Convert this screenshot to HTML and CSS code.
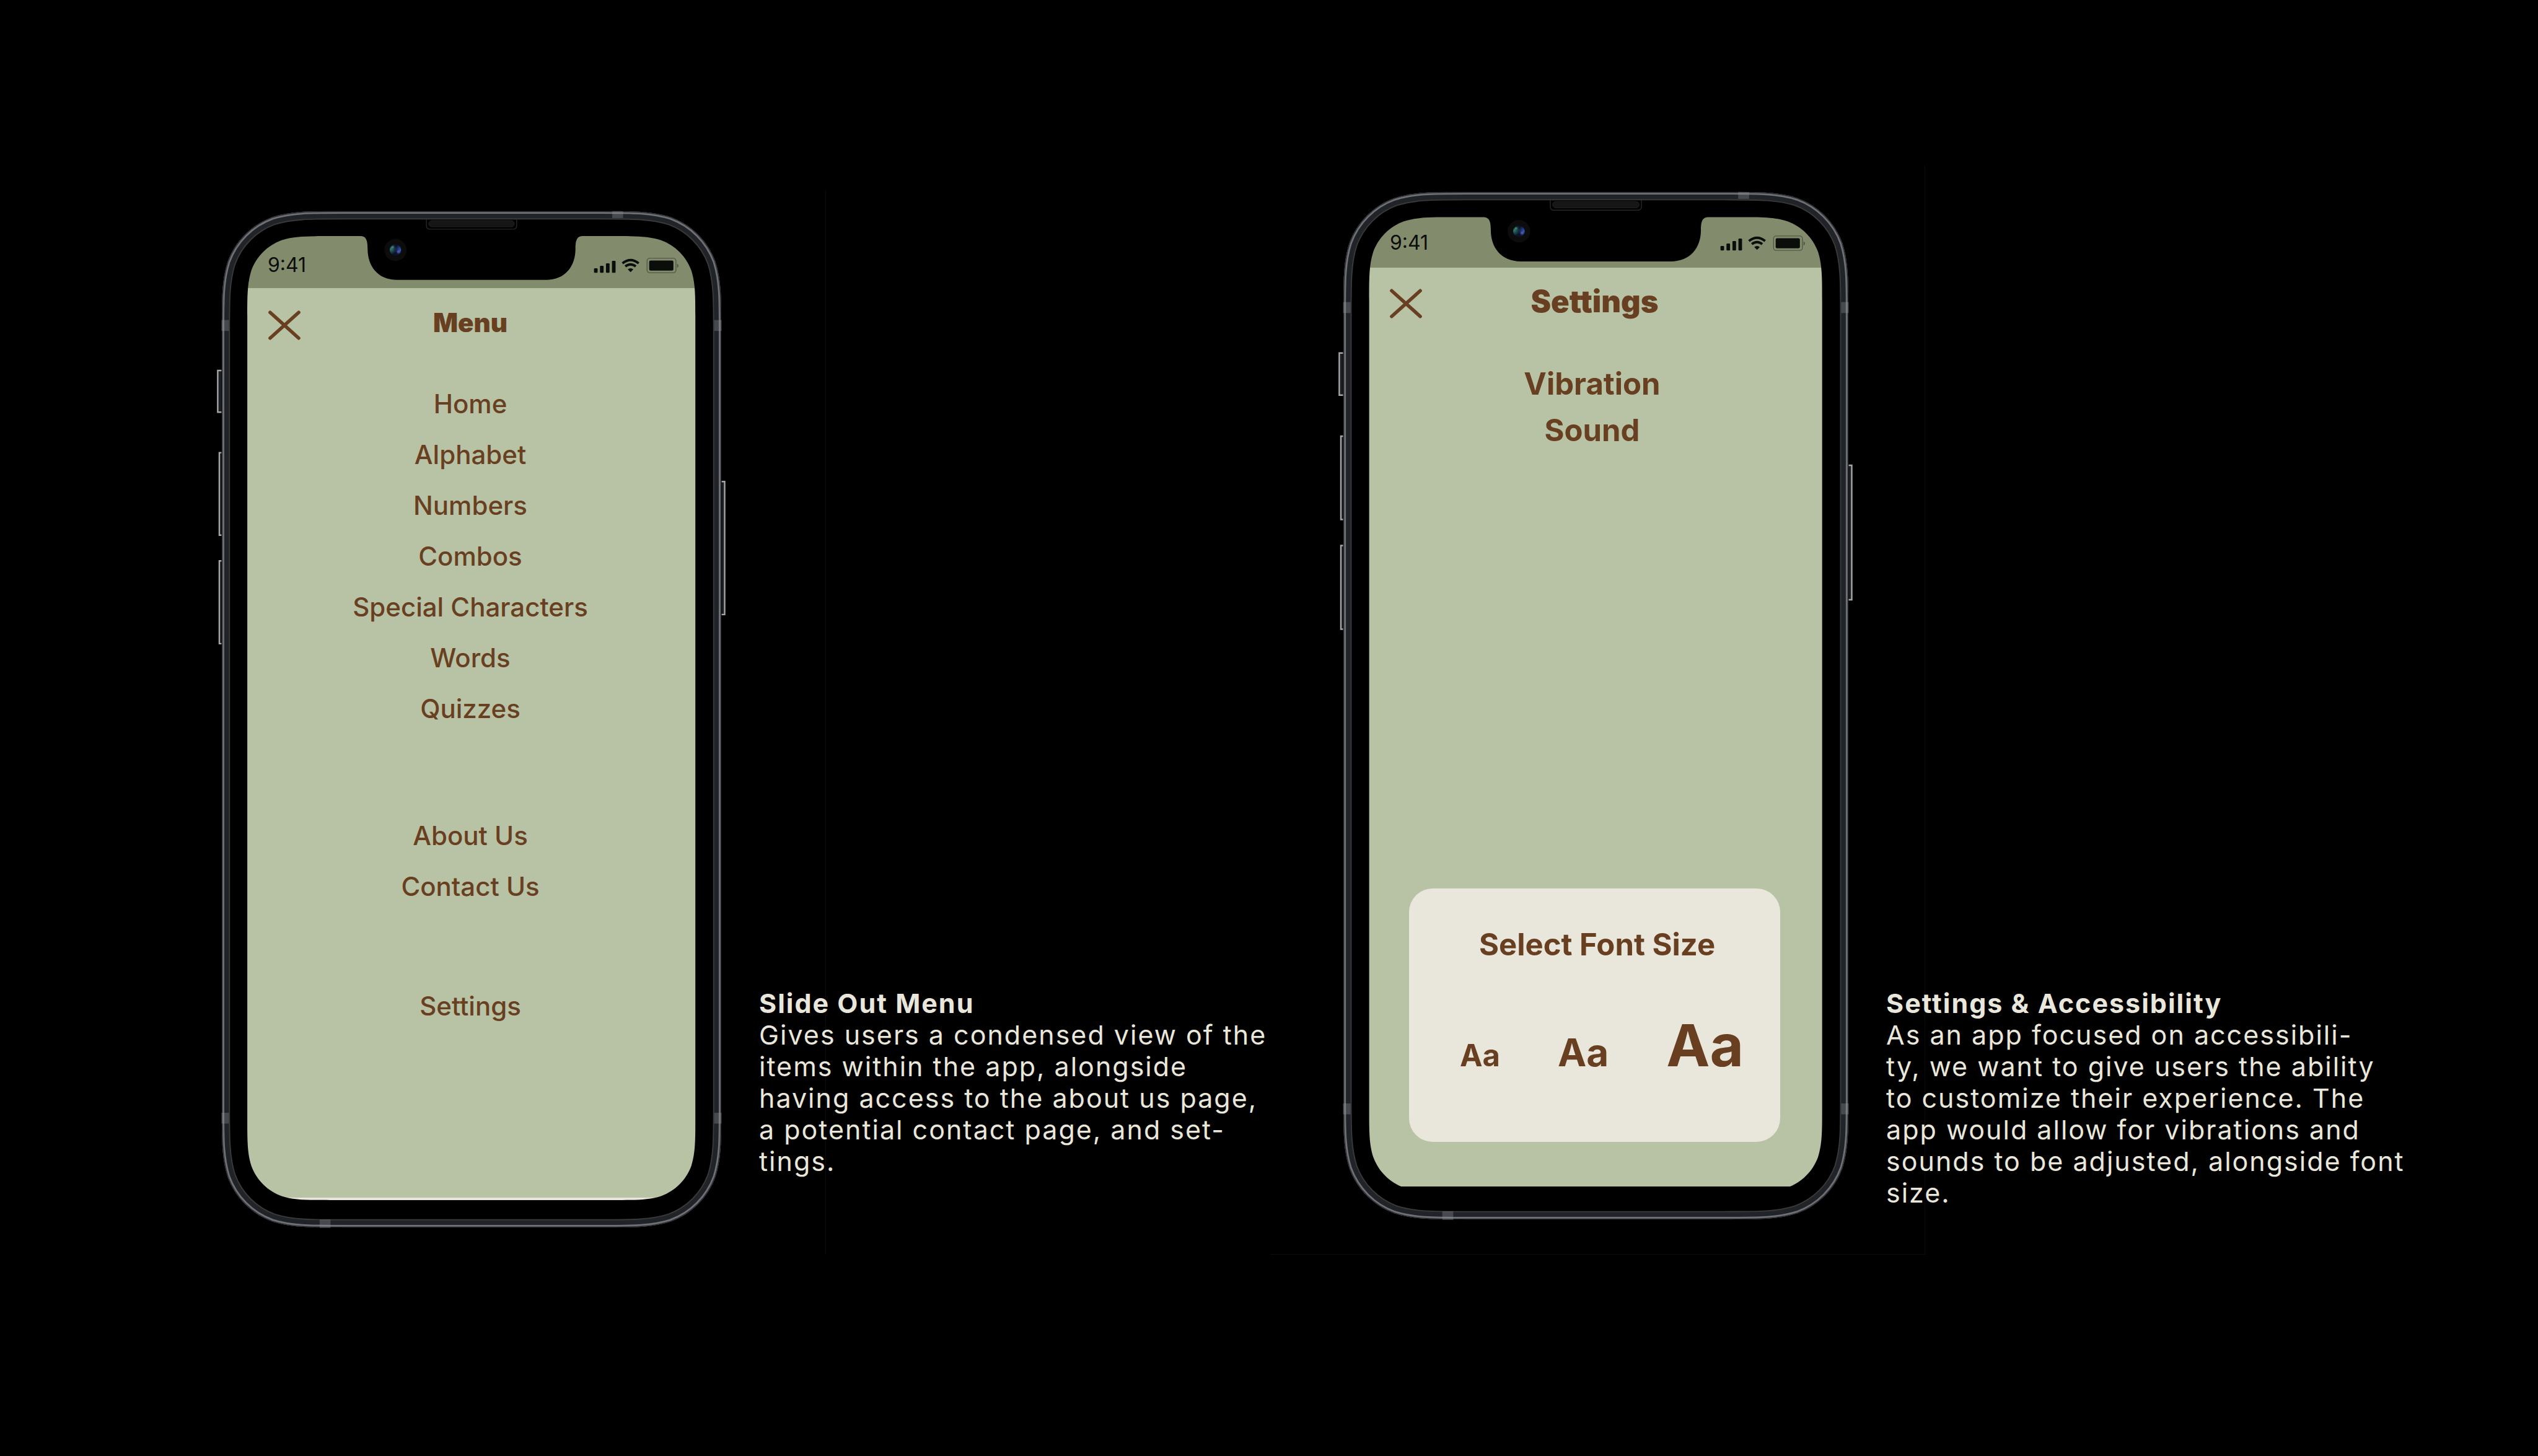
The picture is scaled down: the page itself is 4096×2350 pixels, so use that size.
FILE: index.html
```html
<!DOCTYPE html>
<html lang="en">
<head>
  <meta charset="utf-8">
  <meta name="viewport" content="width=device-width, initial-scale=1">
  <title>Menu and Settings</title>
  <link rel="stylesheet" href="styles.css">
</head>
<body>
  <svg class="sprite" aria-hidden="true">
    <defs>
      <radialGradient id="lens-green" cx="0.1" cy="0.4" r="0.5">
        <stop offset="0" stop-color="#2f7f6c"/>
        <stop offset="1" stop-color="#2f7f6c" stop-opacity="0"/>
      </radialGradient>
      <radialGradient id="lens-blue" cx="0.95" cy="0.5" r="0.5">
        <stop offset="0" stop-color="#3558c4"/>
        <stop offset="1" stop-color="#3558c4" stop-opacity="0"/>
      </radialGradient>
      <clipPath id="body-clip">
        <path d="M214 0H661C722.6 0 753.4 0 786.6 10.5C822.8 23.7 851.3 52.2 864.5 88.4C875 121.6 875 152.4 875 214V1566C875 1627.6 875 1658.4 864.5 1691.6C851.3 1727.8 822.8 1756.3 786.6 1769.5C753.4 1780 722.6 1780 661 1780H214C152.4 1780 121.6 1780 88.4 1769.5C52.2 1756.3 23.7 1727.8 10.5 1691.6C0 1658.4 0 1627.6 0 1566V214C0 152.4 0 121.6 10.5 88.4C23.7 52.2 52.2 23.7 88.4 10.5C121.6 0 152.4 0 214 0Z"/>
      </clipPath>
      <path id="body-outline" d="M214 0H661C722.6 0 753.4 0 786.6 10.5C822.8 23.7 851.3 52.2 864.5 88.4C875 121.6 875 152.4 875 214V1566C875 1627.6 875 1658.4 864.5 1691.6C851.3 1727.8 822.8 1756.3 786.6 1769.5C753.4 1780 722.6 1780 661 1780H214C152.4 1780 121.6 1780 88.4 1769.5C52.2 1756.3 23.7 1727.8 10.5 1691.6C0 1658.4 0 1627.6 0 1566V214C0 152.4 0 121.6 10.5 88.4C23.7 52.2 52.2 23.7 88.4 10.5C121.6 0 152.4 0 214 0Z"/>
    </defs>

    <symbol id="phone-frame" viewBox="-8.5 -2 892 1784">
      <!-- bezel with the display and notch cut out -->
      <path fill="#000" fill-rule="evenodd" d="M214 0H661C722.6 0 753.4 0 786.6 10.5C822.8 23.7 851.3 52.2 864.5 88.4C875 121.6 875 152.4 875 214V1566C875 1627.6 875 1658.4 864.5 1691.6C851.3 1727.8 822.8 1756.3 786.6 1769.5C753.4 1780 722.6 1780 661 1780H214C152.4 1780 121.6 1780 88.4 1769.5C52.2 1756.3 23.7 1727.8 10.5 1691.6C0 1658.4 0 1627.6 0 1566V214C0 152.4 0 121.6 10.5 88.4C23.7 52.2 52.2 23.7 88.4 10.5C121.6 0 152.4 0 214 0Z M190 43.7H242C252 43.7 255.5 49 255.5 66C255.5 95 272 120.4 308 120.4H567C603 120.4 619.5 95 619.5 66C619.5 49 623 43.7 633 43.7H684.3C726.1 43.7 747 43.7 769.5 50.8C794.1 59.8 813.4 79.1 822.4 103.7C829.5 126.2 829.5 147.1 829.5 188.9V1586.8C829.5 1628.6 829.5 1649.5 822.4 1672C813.4 1696.6 794.1 1715.9 769.5 1724.9C747 1732 726.1 1732 684.3 1732H190C148.2 1732 127.3 1732 104.8 1724.9C80.2 1715.9 60.9 1696.6 51.9 1672C44.8 1649.5 44.8 1628.6 44.8 1586.8V188.9C44.8 147.1 44.8 126.2 51.9 103.7C60.9 79.1 80.2 59.8 104.8 50.8C127.3 43.7 148.2 43.7 190 43.7Z"/>
      <!-- metal band -->
      <g clip-path="url(#body-clip)" fill="none">
        <use href="#body-outline" stroke="#3b3a39" stroke-width="29"/>
        <use href="#body-outline" stroke="#202328" stroke-width="25"/>
        <use href="#body-outline" stroke="#6f7075" stroke-width="9"/>
        <use href="#body-outline" stroke="#2c2e32" stroke-width="3"/>
      </g>
      <!-- antenna bands -->
      <g fill="#8f9496" fill-opacity="0.35">
        <rect x="-0.5" y="190.7" width="13" height="19"/>
        <rect x="862.5" y="190.7" width="13" height="19"/>
        <rect x="-0.5" y="1579" width="13" height="19"/>
        <rect x="862.5" y="1579" width="13" height="19"/>
        <rect x="684" y="0" width="19" height="12"/>
        <rect x="171.5" y="1766" width="19" height="15"/>
      </g>
      <!-- earpiece -->
      <path d="M358.5 14V25Q358.5 31.5 365 31.5H510Q516.5 31.5 516.5 25V14" fill="none" stroke="#262626" stroke-width="1.6"/>
      <rect x="362.5" y="16.5" width="150" height="11" rx="5.5" fill="#161616" stroke="#222"/>
      <!-- camera -->
      <circle cx="304.2" cy="68" r="19.5" fill="#0c0c0d"/>
      <circle cx="304.2" cy="68" r="10" fill="#0c1228"/>
      <circle cx="304.2" cy="68" r="10" fill="url(#lens-green)"/>
      <circle cx="304.2" cy="68" r="10" fill="url(#lens-blue)"/>
      <circle cx="309.5" cy="71" r="2.4" fill="#7a6fc0" fill-opacity="0.5"/>
      <circle cx="299.5" cy="63" r="2" fill="#7fb3a4" fill-opacity="0.4"/>
      <!-- side keys -->
      <g fill="#1b1e22" stroke="#a6a6a8" stroke-width="2.6">
        <path d="M-0.5 279H-7V352H-0.5"/>
        <path d="M-0.5 423H-4.2V567.5H-0.5"/>
        <path d="M-0.5 612.5H-4.2V757.5H-0.5"/>
        <path d="M875.5 473.5H880.8V706.5H875.5"/>
      </g>
    </symbol>

    <symbol id="status-icons" viewBox="0 0 150 29">
      <g fill="#0b0d0b">
        <rect x="0.7" y="19.3" width="6.3" height="8" rx="1.5"/>
        <rect x="11.2" y="15" width="6.3" height="12.3" rx="1.5"/>
        <rect x="21.7" y="10.6" width="6.3" height="16.7" rx="1.5"/>
        <rect x="32.2" y="6.3" width="6.3" height="21" rx="1.5"/>
        <path d="M64.8 26.2L59.9 21.3Q64.8 17.3 69.7 21.3Z"/>
        <rect x="97.5" y="5.8" width="42.5" height="17.6" rx="2.5"/>
      </g>
      <g fill="none" stroke="#0b0d0b" stroke-width="4.2">
        <path d="M50.6 10.6Q64.8 -0.8 79 10.6"/>
        <path d="M55.6 16.2Q64.8 9 74 16.2"/>
      </g>
      <rect x="93.8" y="1.8" width="50.6" height="25.4" rx="4.5" fill="none" stroke="#0b0d0b" stroke-opacity="0.4" stroke-width="1.5"/>
      <path d="M146.3 11.5Q149 12 149 15T146.3 18.5Z" fill="#0b0d0b" fill-opacity="0.4"/>
    </symbol>

    <symbol id="close" viewBox="0 0 56 52">
      <path d="M3 3.5L53 48.5M53 3.5L3 48.5" fill="none" stroke="#683f20" stroke-width="6" stroke-linecap="round"/>
    </symbol>
  </svg>

  <main class="showcase">
    <section class="feature feature-menu">
      <div class="phone phone-menu">
        <div class="screen">
          <div class="status">
            <span class="time">9:41</span>
            <svg class="status-icons" role="img" aria-label="Signal, Wi-Fi, battery"><use href="#status-icons"/></svg>
          </div>
          <header class="bar">
            <button class="close" type="button" aria-label="Close menu"><svg class="close-icon"><use href="#close"/></svg></button>
            <h1 class="bar-title">Menu</h1>
          </header>
          <nav class="menu">
            <ul class="menu-group">
              <li><a href="#home">Home</a></li>
              <li><a href="#alphabet">Alphabet</a></li>
              <li><a href="#numbers">Numbers</a></li>
              <li><a href="#combos">Combos</a></li>
              <li><a href="#special">Special Characters</a></li>
              <li><a href="#words">Words</a></li>
              <li><a href="#quizzes">Quizzes</a></li>
            </ul>
            <ul class="menu-group menu-about">
              <li><a href="#about">About Us</a></li>
              <li><a href="#contact">Contact Us</a></li>
            </ul>
            <ul class="menu-group menu-settings">
              <li><a href="#settings">Settings</a></li>
            </ul>
          </nav>
        </div>
        <svg class="frame" aria-hidden="true"><use href="#phone-frame"/></svg>
      </div>
      <div class="caption">
        <h2 class="caption-title">Slide Out Menu</h2>
        <p class="caption-text">Gives users a condensed view of the<br>items within the app, alongside<br>having access to the about us page,<br>a potential contact page, and set-<br>tings.</p>
      </div>
    </section>

    <section class="feature feature-settings">
      <div class="phone phone-settings">
        <div class="screen">
          <div class="status">
            <span class="time">9:41</span>
            <svg class="status-icons" role="img" aria-label="Signal, Wi-Fi, battery"><use href="#status-icons"/></svg>
          </div>
          <header class="bar">
            <button class="close" type="button" aria-label="Close settings"><svg class="close-icon"><use href="#close"/></svg></button>
            <h1 class="bar-title">Settings</h1>
          </header>
          <div class="options">
            <button class="option" type="button">Vibration</button>
            <button class="option" type="button">Sound</button>
          </div>
          <div class="card">
            <h2 class="card-title">Select Font Size</h2>
            <div class="sizes">
              <button class="size size-small" type="button" aria-label="Aa small">Aa</button>
              <button class="size size-medium" type="button" aria-label="Aa medium">Aa</button>
              <button class="size size-large" type="button" aria-label="Aa large">Aa</button>
            </div>
          </div>
        </div>
        <svg class="frame" aria-hidden="true"><use href="#phone-frame"/></svg>
      </div>
      <div class="caption">
        <h2 class="caption-title">Settings &amp; Accessibility</h2>
        <p class="caption-text">As an app focused on accessibili-<br>ty, we want to give users the ability<br>to customize their experience. The<br>app would allow for vibrations and<br>sounds to be adjusted, alongside font<br>size.</p>
      </div>
    </section>
  </main>
</body>
</html>
```
FILE: styles.css
```css
:root {
  --green: #b8c3a5;
  --green-dark: #828c6d;
  --brown: #683f20;
  --cream: #e9e7db;
  --ink: #0b0d0b;
}

* {
  box-sizing: border-box;
}

body {
  margin: 0;
  min-height: 100vh;
  background: #000;
  color: var(--cream);
  font-family: Inter, "Liberation Sans", sans-serif;
}

h1, h2, p, ul {
  margin: 0;
  padding: 0;
}

ul {
  list-style: none;
}

button {
  padding: 0;
  border: 0;
  background: none;
  color: inherit;
  font: inherit;
  cursor: pointer;
}

svg {
  display: block;
}

.sprite {
  position: absolute;
  width: 0;
  height: 0;
}

.showcase {
  display: grid;
  grid-template-columns: 1fr 1fr;
  padding: 308px 126px 0 350px;
}

.feature {
  position: relative;
  display: flex;
  align-items: flex-start;
  gap: 53px;
}

/* hairline edge of each backdrop */
.feature::before {
  content: "";
  position: absolute;
  z-index: -1;
  border: solid #0c0c0c;
}

.feature-menu::before {
  inset: 0 auto auto -150px;
  width: 1132px;
  height: 1716px;
  border-width: 0 1px 0 0;
}

.feature-settings::before {
  inset: -40px auto auto -110px;
  width: 1056px;
  height: 1756px;
  border-width: 0 1px 1px 0;
}

/* phone */
.phone {
  position: relative;
  display: flex;
  flex: none;
  aspect-ratio: 1 / 2;
}

.phone-menu {
  width: 822px;
  margin-top: 31px;
  padding: 42px 48px 46px;
}

.phone-settings {
  width: 831px;
  padding: 42px 48px 55px;
}

.frame {
  position: absolute;
  inset: 0;
  width: 100%;
  height: 100%;
  pointer-events: none;
}

.screen {
  display: flex;
  flex: 1;
  flex-direction: column;
  background: var(--green);
  color: var(--brown);
}

.phone-menu .screen {
  border-bottom: 4px solid var(--cream);
}

.status {
  display: flex;
  align-items: flex-start;
  justify-content: space-between;
  height: 84px;
  padding: 27px 28px 0 34px;
  background: var(--green-dark);
  color: var(--ink);
}

.phone-settings .status {
  height: 82px;
  padding: 22px 29px 0 35px;
}

.time {
  font-size: 32px;
  line-height: 40px;
}

.status-icons {
  width: 138px;
  height: 27px;
  margin-top: 7px;
}

.bar {
  display: grid;
  grid-template-columns: 52px 1fr 52px;
  align-items: start;
  padding: 31px 39px 0 35px;
}

.close {
  padding-top: 5px;
}

.close-icon {
  width: 52px;
  height: 48px;
}

.bar-title {
  font-size: 42px;
  font-weight: 900;
  line-height: 50px;
  text-align: center;
}

.phone-settings .bar {
  padding-top: 26px;
}

.phone-settings .close {
  padding-top: 8px;
}

.phone-settings .bar-title {
  font-size: 49px;
  line-height: 58px;
}

/* menu screen */
.menu {
  padding: 78px 4px 0 0;
  font-size: 42px;
  font-weight: 500;
  line-height: 50px;
  text-align: center;
}

.menu a {
  color: inherit;
  text-decoration: none;
}

.menu-group {
  display: flex;
  flex-direction: column;
  gap: 32px;
}

.menu-about {
  margin-top: 155px;
}

.menu-settings {
  margin-top: 143px;
}

/* settings screen */
.options {
  display: flex;
  flex-direction: column;
  align-items: center;
  gap: 17px;
  padding: 75px 12px 0 0;
}

.option {
  font-size: 49px;
  font-weight: 700;
  line-height: 58px;
}

.card {
  margin: auto 70px 72px 66px;
  padding: 62px 40px 100px;
  border-radius: 38px;
  background: var(--cream);
}

.card-title {
  padding-left: 8px;
  font-size: 49px;
  font-weight: 700;
  line-height: 58px;
  text-align: center;
}

.sizes {
  display: flex;
  align-items: baseline;
  gap: 93px;
  margin-top: 77px;
  padding-left: 42px;
}

.size {
  font-weight: 700;
}

.size-small {
  font-size: 49px;
  line-height: 58px;
}

.size-medium {
  font-size: 62px;
  line-height: 72px;
}

.size-large {
  font-size: 94px;
  line-height: 112px;
}

/* captions */
.caption {
  padding-top: 1286px;
  font-size: 43px;
  line-height: 51px;
  letter-spacing: 2px;
  white-space: nowrap;
}

.caption-title {
  font-size: inherit;
  font-weight: 700;
}
```
